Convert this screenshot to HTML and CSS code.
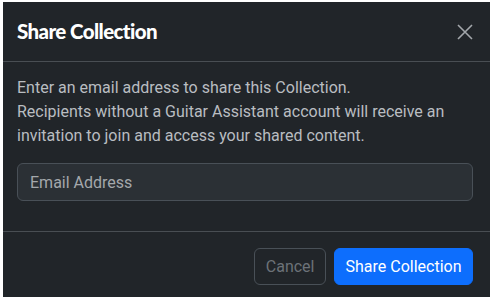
FILE: index.html
```html
<!DOCTYPE html>
<html lang="en">
<head>
<meta charset="utf-8">
<title>Share Collection</title>
<link rel="stylesheet" href="styles.css">
</head>
<body>
<div class="dialog">
  <div class="header">
    <h5 class="title">Share Collection</h5>
    <button class="close" aria-label="Close">
      <svg width="16" height="16" viewBox="0 0 16 16"><path d="M1 1L15 15M15 1L1 15" stroke="#a3a7ab" stroke-width="1.6" fill="none"/></svg>
    </button>
  </div>
  <div class="body">
    <p class="desc">Enter an email address to share this Collection.<br>Recipients without a Guitar Assistant account will receive an invitation to join and access your shared content.</p>
    <input class="email" type="email" placeholder="Email Address">
  </div>
  <div class="footer">
    <button class="btn btn-cancel">Cancel</button>
    <button class="btn btn-primary">Share Collection</button>
  </div>
</div>
</body>
</html>
```
FILE: styles.css
```css
html, body {
  margin: 0;
  padding: 0;
  background: #ffffff;
}
body {
  width: 490px;
  height: 300px;
  overflow: hidden;
  font-family: Roboto, "Liberation Sans", sans-serif;
}
.dialog {
  margin: 2px 0 0 3px;
  width: 487px;
  height: 295px;
  background: #212529;
  display: flex;
  flex-direction: column;
  box-sizing: border-box;
}
.header {
  display: flex;
  align-items: center;
  justify-content: space-between;
  padding: 14px 17px 15px 14px;
  border-bottom: 1px solid #494e53;
}
.title {
  margin: 0;
  font-family: Lato, sans-serif;
  font-weight: 900;
  font-size: 20.5px;
  letter-spacing: -0.6px;
  line-height: 30px;
  color: #ffffff;
}
.close {
  background: none;
  border: 0;
  padding: 0;
  width: 16px;
  height: 16px;
  display: flex;
  margin-top: 2px;
}
.body {
  padding: 14px 17px 30px 14px;
  display: flex;
  flex-direction: column;
  gap: 15px;
}
.desc {
  margin: 0;
  font-size: 16px;
  line-height: 24px;
  color: #b9bdc1;
}
.email {
  height: 38px;
  box-sizing: border-box;
  background: #2b3035;
  border: 1px solid #495057;
  border-radius: 6px;
  padding: 0 12px;
  font-family: Roboto, sans-serif;
  font-size: 16px;
  color: #dee2e6;
  outline: none;
}
.email::placeholder {
  color: #a4a8ac;
}
.footer {
  border-top: 1px solid #494e53;
  padding: 16px 17px 12px 14px;
  display: flex;
  justify-content: flex-end;
  gap: 8px;
}
.btn {
  font-family: Roboto, sans-serif;
  font-size: 16px;
  line-height: 24px;
  padding: 6px 10.5px;
  border-radius: 6px;
  height: 37px;
  box-sizing: border-box;
}
.btn-cancel {
  background: transparent;
  border: 1px solid #495057;
  color: #6c7278;
}
.btn-primary {
  background: #0d6efd;
  border: 1px solid #0d6efd;
  color: #ffffff;
}
```
